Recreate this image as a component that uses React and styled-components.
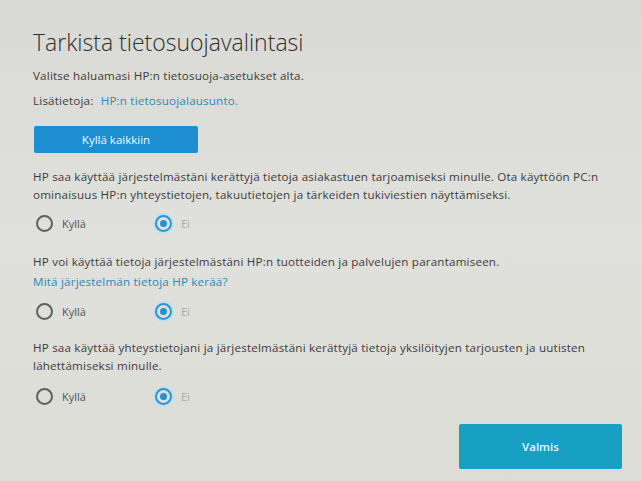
import React from 'react';
import styled, { createGlobalStyle } from 'styled-components';

// --- Styles --- //

const GlobalStyle = createGlobalStyle`
  html, body {
    margin: 0;
    height: 100%;
  }
  body {
    background: linear-gradient(180deg, #d9dad5 0%, #e0e0dc 50%, #dcdcd7 100%);
    font-family: "Open Sans", "Noto Sans", sans-serif;
    color: #3c3c3c;
  }
`

const Page = styled.main`
  display: flex;
  flex-direction: column;
  height: 481px;
  padding: 28px 12px 12px 33px;
  box-sizing: border-box;
`

const Title = styled.h1`
  font-size: 23px;
  font-weight: 300;
  color: #2e2e2e;
  margin: 0 0 11px;
  line-height: 28px;
`

const Text = styled.p`
  font-size: 11.6px;
  line-height: 18px;
  letter-spacing: 0.2px;
  margin: 0;
  color: #3c3c3c;
  white-space: nowrap;
`

const Info = styled(Text)`
  margin-top: 7px;
`

const Link = styled.a`
  color: #2b89b8;
  text-decoration: none;
  margin-left: ${p => p.$gap ? '4px' : '0'};
`

const LinkLine = styled(Text)`
  margin-top: 2px;
`

const PrimaryButton = styled.button`
  background: #1d8fd0;
  border: none;
  border-radius: 2px;
  color: #f4f8fb;
  font-family: inherit;
  font-size: 11.5px;
  font-weight: 500;
  width: 164px;
  height: 27px;
  margin: 16px 0 0 1px;
  align-self: flex-start;
`

const Question = styled.section`
  margin-top: ${p => p.$top}px;
`

const Radios = styled.div`
  display: flex;
  align-items: center;
  margin-top: ${p => p.$top}px;
  margin-left: 3px;
`

const Option = styled.label`
  display: flex;
  align-items: center;
  gap: 9px;
  width: 119px;
  font-size: 11px;
  color: ${p => p.$checked ? '#a9a9a9' : '#555'};
`

const Circle = styled.span`
  box-sizing: border-box;
  width: 17px;
  height: 17px;
  border-radius: 50%;
  border: 2px solid ${p => p.$checked ? '#2a95cf' : '#5f5f5f'};
  display: flex;
  align-items: center;
  justify-content: center;
  box-shadow: ${p => p.$checked ? '0 0 0 2px #bfe0ef' : 'none'};
  &::after {
    content: '';
    width: 7px;
    height: 7px;
    border-radius: 50%;
    background: #2592cf;
    display: ${p => p.$checked ? 'block' : 'none'};
  }
`

const Footer = styled.div`
  margin-top: auto;
  display: flex;
  justify-content: flex-end;
  padding-right: 8px;
`

const DoneButton = styled.button`
  background: #17a0c4;
  border: none;
  border-radius: 2px;
  color: #eaf6fa;
  font-family: inherit;
  font-size: 11.5px;
  font-weight: 600;
  width: 163px;
  height: 45px;
`

// --- Component --- //

const RadioPair = ({ top }) => (
  <Radios $top={top}>
    <Option><Circle />Kyllä</Option>
    <Option $checked><Circle $checked />Ei</Option>
  </Radios>
)

const App = () => (
  <>
    <GlobalStyle />
    <Page>
      <Title>Tarkista tietosuojavalintasi</Title>
      <Text>Valitse haluamasi HP:n tietosuoja-asetukset alta.</Text>
      <Info>Lisätietoja: <Link $gap>HP:n tietosuojalausunto.</Link></Info>
      <PrimaryButton>Kyllä kaikkiin</PrimaryButton>

      <Question $top={15}>
        <Text>
          HP saa käyttää järjestelmästäni kerättyjä tietoja asiakastuen tarjoamiseksi minulle. Ota käyttöön PC:n<br />
          ominaisuus HP:n yhteystietojen, takuutietojen ja tärkeiden tukiviestien näyttämiseksi.
        </Text>
        <RadioPair top={11} />
      </Question>

      <Question $top={21}>
        <Text>HP voi käyttää tietoja järjestelmästäni HP:n tuotteiden ja palvelujen parantamiseen.</Text>
        <LinkLine><Link>Mitä järjestelmän tietoja HP kerää?</Link></LinkLine>
        <RadioPair top={12} />
      </Question>

      <Question $top={19}>
        <Text>
          HP saa käyttää yhteystietojani ja järjestelmästäni kerättyjä tietoja yksilöityjen tarjousten ja uutisten<br />
          lähettämiseksi minulle.
        </Text>
        <RadioPair top={13} />
      </Question>

      <Footer>
        <DoneButton>Valmis</DoneButton>
      </Footer>
    </Page>
  </>
)

export default App;
